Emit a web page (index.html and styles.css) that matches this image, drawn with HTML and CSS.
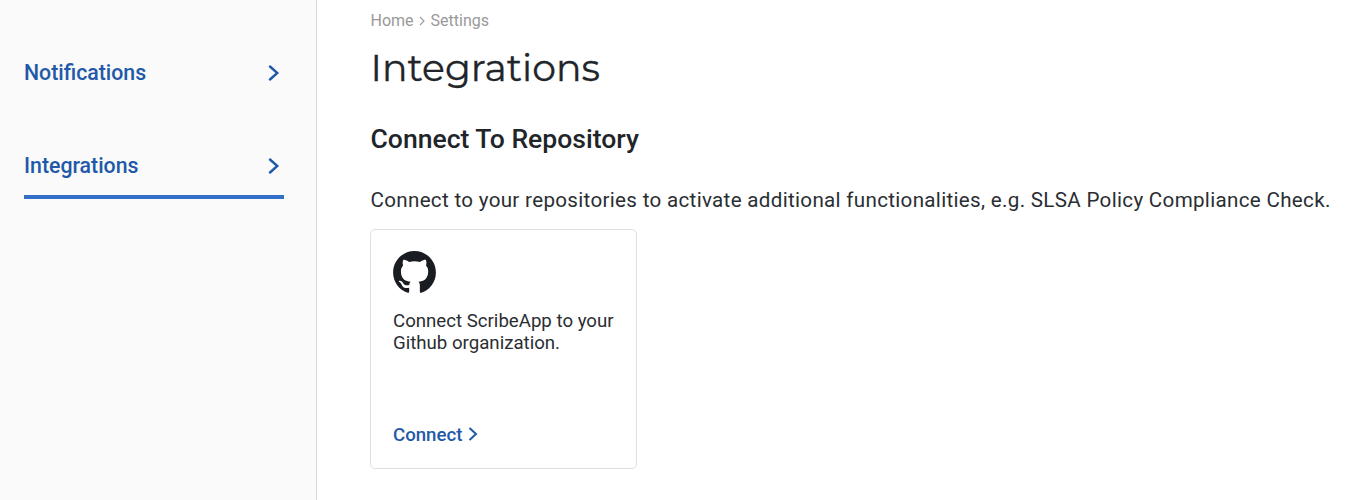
FILE: index.html
```html
<!DOCTYPE html>
<html lang="en">
<head>
<meta charset="utf-8">
<title>Integrations</title>
<link rel="stylesheet" href="styles.css">
</head>
<body>
<div class="layout">
  <nav class="sidebar">
    <a class="nav-item"><span>Notifications</span><svg class="nav-arrow" viewBox="0 0 12 16"><path d="M2 1.5 9.3 8 2 14.5"/></svg></a>
    <a class="nav-item active"><span>Integrations</span><svg class="nav-arrow" viewBox="0 0 12 16"><path d="M2 1.5 9.3 8 2 14.5"/></svg></a>
  </nav>
  <main class="content">
    <div class="breadcrumb"><span class="crumb-home">Home</span><svg class="crumb-arrow" viewBox="0 0 6 10"><path d="M1 1 5 5 1 9"/></svg><span class="crumb-current">Settings</span></div>
    <h1 class="title">Integrations</h1>
    <h2 class="subtitle">Connect To Repository</h2>
    <p class="intro">Connect to your repositories to activate additional functionalities, e.g. SLSA Policy Compliance Check.</p>
    <section class="card">
      <svg class="github" viewBox="0 0 16 15.7"><path d="M8 0C3.58 0 0 3.58 0 8c0 3.54 2.29 6.53 5.47 7.59.4.07.55-.17.55-.38 0-.19-.01-.82-.01-1.49-2.01.37-2.53-.49-2.69-.94-.09-.23-.48-.94-.82-1.13-.28-.15-.68-.52-.01-.53.63-.01 1.08.58 1.23.82.72 1.21 1.87.87 2.33.66.07-.52.28-.87.51-1.07-1.78-.2-3.64-.89-3.64-3.95 0-.87.31-1.59.82-2.15-.08-.2-.36-1.02.08-2.12 0 0 .67-.21 2.2.82.64-.18 1.32-.27 2-.27s1.36.09 2 .27c1.53-1.04 2.2-.82 2.2-.82.44 1.1.16 1.92.08 2.12.51.56.82 1.27.82 2.15 0 3.07-1.87 3.75-3.65 3.95.29.25.54.73.54 1.48 0 1.07-.01 1.93-.01 2.2 0 .21.15.46.55.38A8.01 8.01 0 0 0 16 8c0-4.42-3.58-8-8-8z"/></svg>
      <p class="card-text">Connect ScribeApp to your<br>Github organization.</p>
      <a class="connect"><span class="connect-label">Connect</span><svg class="connect-arrow" viewBox="0 0 10 14"><path d="M1.5 1 8 7 1.5 13"/></svg></a>
    </section>
  </main>
</div>
</body>
</html>
```
FILE: styles.css
```css
* { box-sizing: border-box; }
body { margin: 0; background: #fff; color: #212529; font-family: Roboto, "Liberation Sans", sans-serif; overflow: hidden; }
h1, h2, p { margin: 0; }
svg { display: block; flex: none; }
.layout { display: flex; height: 500px; }
.sidebar { flex: none; width: 317px; padding: 45px 32px 0 24px; background: #fafafa; border-right: 1px solid #d9d9d9; display: flex; flex-direction: column; gap: 33px; }
.nav-item { display: flex; justify-content: space-between; align-items: center; height: 60px; padding: 0 4px 0 0; color: #1f59a8; font-size: 21.3px; font-weight: 500; border-bottom: 4px solid transparent; }
.nav-item span { padding-bottom: 2px; white-space: nowrap; }
.nav-item.active { border-bottom-color: #316fc8; height: 61px; padding-bottom: 1px; }
.nav-arrow { width: 12px; height: 16px; fill: none; stroke: #1f59a8; stroke-width: 2.4; stroke-linecap: round; stroke-linejoin: miter; }
.content { flex: 1; padding: 9px 0 0 53.5px; white-space: nowrap; }
.breadcrumb { display: flex; align-items: center; height: 22px; color: #999; font-size: 16px; }
.crumb-arrow { width: 6px; height: 10px; margin: 1px 5.5px 0; fill: none; stroke: #999; stroke-width: 1.1; }
.title { margin-top: 12px; height: 48px; line-height: 48px; font-family: Montserrat, Inter, sans-serif; font-size: 37.8px; font-weight: 400; -webkit-text-stroke: 0.3px #212529; }
.subtitle { margin-top: 32px; height: 32px; line-height: 32px; font-size: 26.55px; font-weight: 500; }
.intro { margin-top: 30px; height: 30px; line-height: 30px; color: #2a2e32; font-size: 20.6px; letter-spacing: 0.31px; }
.card { display: flex; flex-direction: column; width: 267px; height: 240px; margin: 14px 0 0 -0.5px; padding: 21px 22px 0; border: 1px solid #dedfe1; border-radius: 5px; }
.github { width: 43px; height: 42px; fill: #191c20; }
.card-text { margin-top: 17px; color: #2a2e32; font-size: 18.65px; line-height: 22px; }
.connect { display: flex; align-items: center; height: 24px; margin-top: 69px; color: #1f59a8; font-size: 18.65px; font-weight: 500; }
.connect-arrow { width: 10px; height: 14px; margin: -2px 0 0 6px; fill: none; stroke: #1f59a8; stroke-width: 2; }
```
